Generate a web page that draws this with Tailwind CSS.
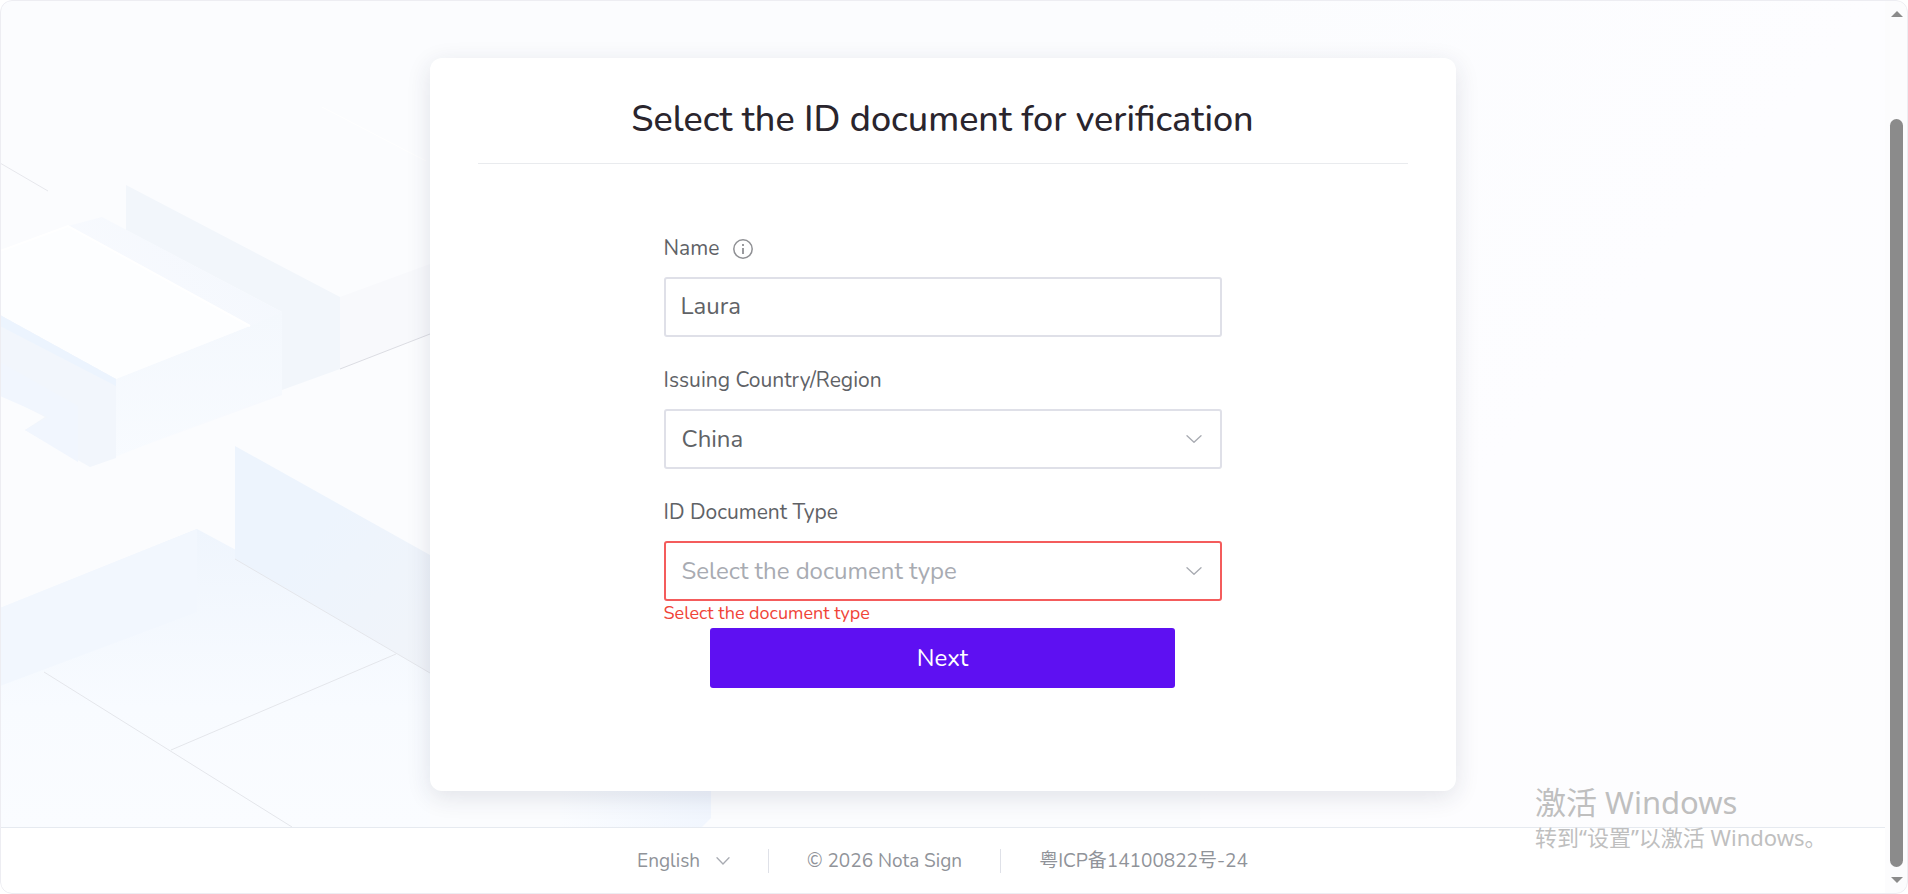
<!DOCTYPE html>
<html lang="en">

<head>
    <meta charset="UTF-8">
    <meta name="viewport" content="width=device-width, initial-scale=1.0">
    <title>Nota Sign</title>
    <script src="https://cdn.jsdelivr.net/npm/@tailwindcss/browser@4"></script>
</head>

<body class="bg-white font-[Nunito,'Noto_Sans','Noto_Sans_CJK_SC',sans-serif] text-[#606266]">
    <div class="relative flex min-h-screen overflow-hidden rounded-xl">

        <div class="flex flex-1 flex-col">
            <!-- Form area -->
            <main class="relative flex flex-1 items-start justify-center bg-[#fbfcfe] pt-[58px] pb-9">
                <svg class="absolute inset-0 h-full w-full" viewBox="0 0 1885 827" preserveAspectRatio="xMinYMin slice" aria-hidden="true">
                    <defs>
                        <linearGradient id="floor" x1="0" y1="0" x2="0" y2="1">
                            <stop offset="0" stop-color="#eff5fd" />
                            <stop offset="0.6" stop-color="#f8fbff" />
                            <stop offset="1" stop-color="#fafcff" />
                        </linearGradient>
                        <linearGradient id="step" x1="0" y1="1" x2="1" y2="0">
                            <stop offset="0" stop-color="#fbfcff" />
                            <stop offset="1" stop-color="#f3f7fd" />
                        </linearGradient>
                        <linearGradient id="front" x1="0" y1="0" x2="0" y2="1">
                            <stop offset="0" stop-color="#f4f8fd" />
                            <stop offset="1" stop-color="#f8fbff" />
                        </linearGradient>
                        <linearGradient id="wall" x1="0" y1="0" x2="1" y2="1">
                            <stop offset="0.4" stop-color="#edf4fd" />
                            <stop offset="1" stop-color="#f1f4f9" />
                        </linearGradient>
                        <linearGradient id="base" x1="0" y1="0" x2="1" y2="0">
                            <stop offset="0" stop-color="#fafcff" />
                            <stop offset="1" stop-color="#f1f6fe" />
                        </linearGradient>
                        <linearGradient id="right" x1="0" y1="0" x2="1" y2="1">
                            <stop offset="0" stop-color="#fbfcfe" />
                            <stop offset="0.5" stop-color="#fdfdff" />
                            <stop offset="1" stop-color="#fdfdfe" />
                        </linearGradient>
                    </defs>
                    <rect x="1200" width="685" height="827" fill="url(#right)" />
                    <!-- upper blocks -->
                    <path d="M126 185L340 297V369L282 390V312L126 230Z" fill="#f2f6fb" />
                    <path d="M340 297L430 264V334L340 369Z" fill="#f8f9fc" />
                    <path d="M102 217L282 312V395L116 456V379L250 326L68 226Z" fill="url(#step)" />
                    <path d="M116 379L250 326L282 312V393L155 441L90 467Z" fill="url(#front)" />
                    <path d="M0 252L68 226L250 326L116 379L0 315Z" fill="#fdfeff" />
                    <path d="M0 315L116 379V458L90 467L25 430L45 417L0 394Z" fill="#f2f6fc" />
                    <path d="M0 362L78 406V462L25 430L48 417L0 396Z" fill="#f1f6fe" />
                    <path d="M0 315L116 379V386L0 326Z" fill="#ecf4fe" />
                    <path d="M0 251L68 226L250 326" fill="none" stroke="#fff" stroke-width="2" />
                    <path d="M322 107L426 161" stroke="#fff" stroke-width="1" />
                    <path d="M0 163L48 191" stroke="#e6e7ec" stroke-width="1" />
                    <path d="M340 369L430 334" stroke="#dcdde3" stroke-width="1" />
                    <!-- lower blocks -->
                    <path d="M0 608L197 529L236 550L430 660V827H0Z" fill="url(#floor)" />
                    <path d="M0 608L197 529V612L0 686Z" fill="#f2f7fe" />
                    <path d="M235 446L430 555V673L235 559Z" fill="url(#wall)" />
                    <path d="M560 791H711V818L702 827H560Z" fill="url(#base)" />
                    <g fill="none" stroke="#e4e6eb" stroke-width="1">
                        <path d="M235 559L430 673" />
                        <path d="M44 672L292 827" />
                        <path d="M171 750L396 654" />
                    </g>
                </svg>

                <section class="relative w-full max-w-[1026px] rounded-xl bg-white px-12 pt-[37px] pb-[103px] shadow-[0_6px_24px_rgba(30,40,70,0.12)]">
                    <h1 class="border-b border-[#e9ebee] pb-[18px] text-center text-[36px] leading-[50px] font-medium text-[#2a252d]">Select the ID document for verification</h1>

                    <form class="mx-auto mt-[67px] max-w-[558px]" novalidate>
                        <div class="mb-[26px]">
                            <div class="mb-[10px] flex h-9 items-center gap-[14px]">
                                <label for="name" class="text-[21px]">Name</label>
                                <svg class="size-5" viewBox="0 0 20 20" fill="none" stroke="#8f9094" aria-hidden="true">
                                    <circle cx="10" cy="10" r="9.2" stroke-width="1.5" />
                                    <path d="M10 9V15M10 5V7" stroke-width="1.8" />
                                </svg>
                            </div>
                            <input type="text" id="name" name="name" value="Laura"
                                class="block h-[60px] w-full rounded-[3px] border-2 border-[#dfe0e8] bg-white px-[15px] pb-[2px] text-[24px] outline-none">
                        </div>

                        <div class="mb-[26px]">
                            <label for="country" class="mb-[10px] flex h-9 items-center text-[21px]">Issuing Country/Region</label>
                            <div class="relative">
                                <select id="country" name="country"
                                    class="block h-[60px] w-full appearance-none rounded-[3px] border-2 border-[#dfe0e8] bg-white px-4 text-[24px] outline-none">
                                    <option>China</option>
                                </select>
                                <svg class="pointer-events-none absolute top-[26px] right-5 h-2 w-4" viewBox="0 0 16 8" fill="none" stroke="#a8abb2" stroke-width="1.3" stroke-linecap="round" aria-hidden="true">
                                    <path d="M1 0.7L8 7.3L15 0.7" />
                                </svg>
                            </div>
                        </div>

                        <div>
                            <label for="doctype" class="mb-[10px] flex h-9 items-center text-[21px]">ID Document Type</label>
                            <div class="relative">
                                <select id="doctype" name="doctype"
                                    class="block h-[60px] w-full appearance-none rounded-[3px] border-2 border-[#f45c5c] bg-white px-4 text-[24px] text-[#a8abb2] outline-none">
                                    <option value="">Select the document type</option>
                                </select>
                                <svg class="pointer-events-none absolute top-[26px] right-5 h-2 w-4" viewBox="0 0 16 8" fill="none" stroke="#a8abb2" stroke-width="1.3" stroke-linecap="round" aria-hidden="true">
                                    <path d="M1 0.7L8 7.3L15 0.7" />
                                </svg>
                            </div>
                            <p class="pb-[3px] text-[18px] leading-6 text-[#f04438]">Select the document type</p>
                        </div>

                        <button type="submit" class="mx-auto block h-[60px] w-full max-w-[465px] rounded-[3px] bg-[#5e10f2] text-[24px] text-white">Next</button>
                    </form>
                </section>
            </main>

            <!-- Footer -->
            <footer class="flex h-[67px] items-center justify-center border-t border-[#e6eaf0] bg-white text-[19px] text-[#909399]">
                <button type="button" class="flex items-center gap-4 pr-[38px]">
                    English
                    <svg class="h-2 w-[14px]" viewBox="0 0 14 8" fill="none" stroke="#a8abb2" stroke-width="1.3" stroke-linecap="round" aria-hidden="true">
                        <path d="M1 0.7L7 7L13 0.7" />
                    </svg>
                </button>
                <span class="border-x border-[#dfe1e8] px-[38px] leading-6">© 2026 Nota Sign</span>
                <a href="#" class="pl-[38px]">粤ICP备14100822号-24</a>
            </footer>
        </div>

        <!-- Scrollbar -->
        <div class="flex w-[23px] flex-col items-center bg-[#fcfcfd] py-[11px]" aria-hidden="true">
            <svg class="h-[6px] w-3" viewBox="0 0 12 6" fill="#8b8b8b"><path d="M0 6L6 0L12 6Z" /></svg>
            <div class="mt-[102px] mb-[10px] w-[13px] flex-1 rounded-full bg-[#8b8b8b]"></div>
            <svg class="h-[6px] w-3" viewBox="0 0 12 6" fill="#8b8b8b"><path d="M0 0L6 6L12 0Z" /></svg>
        </div>

        <!-- Activation notice -->
        <div class="pointer-events-none absolute right-[87px] bottom-[42px] w-[286px] font-['Noto_Sans','Noto_Sans_CJK_SC',sans-serif] whitespace-nowrap text-[#bfbfbf]">
            <p class="text-[31px] leading-10">激活 Windows</p>
            <p class="text-[22px] leading-[30px]">转到“设置”以激活 Windows。</p>
        </div>

        <!-- Window outline -->
        <div class="pointer-events-none absolute inset-0 rounded-xl border border-[#ededf2]"></div>
    </div>
</body>

</html>
